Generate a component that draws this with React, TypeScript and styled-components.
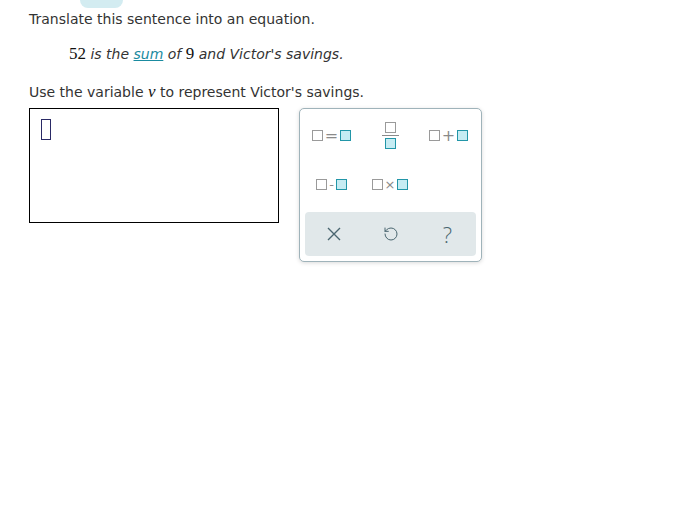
import styled, { createGlobalStyle } from "styled-components";
import { RotateCcw } from "lucide-react";

const GlobalStyle = createGlobalStyle`
  body {
    margin: 0;
    background: #fff;
    font-family: "DejaVu Sans", Verdana, sans-serif;
    color: #333;
  }
`;

const Box = ({ filled }: { filled?: boolean }) => <Square $filled={filled} />;

const App = () => {
  return (
    <>
      <GlobalStyle />
      <Page>
        <TopTab />
        <Prompt>Translate this sentence into an equation.</Prompt>
        <Sentence>
          <Num>52</Num> is the <Term href="#">sum</Term> of <Num>9</Num> and
          Victor's savings.
        </Sentence>
        <Prompt>
          Use the variable <Var>v</Var> to represent Victor's savings.
        </Prompt>
        <Workspace>
          <AnswerBox>
            <Cursor />
          </AnswerBox>
          <Keypad>
            <KeyGrid>
              <Key>
                <Box />
                <Op>=</Op>
                <Box filled />
              </Key>
              <Key>
                <Fraction>
                  <Box />
                  <FracBar />
                  <Box filled />
                </Fraction>
              </Key>
              <Key>
                <Box />
                <Op>+</Op>
                <Box filled />
              </Key>
              <Key>
                <Box />
                <Op $small>-</Op>
                <Box filled />
              </Key>
              <Key>
                <Box />
                <Op $small>×</Op>
                <Box filled />
              </Key>
            </KeyGrid>
            <ActionBar>
              <Action>
                <svg width="14" height="14" viewBox="0 0 14 14">
                  <path
                    d="M1 1 L13 13 M13 1 L1 13"
                    stroke="#4a6670"
                    strokeWidth="1.4"
                    fill="none"
                  />
                </svg>
              </Action>
              <Action>
                <RotateCcw size={16} strokeWidth={1.5} color="#4a6670" />
              </Action>
              <Action>
                <Help>?</Help>
              </Action>
            </ActionBar>
          </Keypad>
        </Workspace>
      </Page>
    </>
  );
};

const Page = styled.div`
  position: relative;
  padding: 10px 29px;
`;

const TopTab = styled.div`
  position: absolute;
  left: 80px;
  top: -10px;
  width: 43px;
  height: 18px;
  border-radius: 8px;
  background: #d3ecf1;
`;

const Prompt = styled.p`
  margin: 0;
  font-size: 14px;
  line-height: 18px;
  color: #333;
`;

const Sentence = styled.p`
  margin: 17px 0 20px 40px;
  font-size: 14px;
  line-height: 18px;
  font-style: italic;
  color: #333;
`;

const Num = styled.span`
  font-family: "Liberation Serif", serif;
  font-style: normal;
  font-size: 17px;
  color: #111;
`;

const Var = styled.span`
  font-family: "Liberation Serif", serif;
  font-style: italic;
  font-size: 17px;
  color: #111;
`;

const Term = styled.a`
  color: #1a8ba0;
  text-decoration: underline;
`;

const Workspace = styled.div`
  display: flex;
  align-items: flex-start;
  gap: 20px;
  margin-top: 7px;
`;

const AnswerBox = styled.div`
  width: 250px;
  height: 115px;
  border: 1px solid #000;
  padding: 10px 11px;
  box-sizing: border-box;
`;

const Cursor = styled.div`
  width: 10px;
  height: 21px;
  border: 1px solid #2a2a66;
  box-sizing: border-box;
`;

const Keypad = styled.div`
  width: 183px;
  box-sizing: border-box;
  border: 1px solid #9fb3ba;
  border-radius: 5px;
  box-shadow: 0 1px 4px rgba(0, 0, 0, 0.15);
  padding: 2px 5px 5px;
  background: #fff;
`;

const KeyGrid = styled.div`
  display: grid;
  grid-template-columns: repeat(3, 57px);
  grid-auto-rows: 49px;
  justify-content: space-between;
  margin: 0 -1px 3px -2px;
`;

const Key = styled.div`
  display: flex;
  align-items: center;
  justify-content: center;
  gap: 2px;
`;

const Square = styled.span<{ $filled?: boolean }>`
  display: block;
  width: 11px;
  height: 11px;
  box-sizing: border-box;
  border: 1.5px solid ${(p) => (p.$filled ? "#2296a8" : "#9a9a9a")};
  background: ${(p) => (p.$filled ? "#c6ecf3" : "#fff")};
`;

const Op = styled.span<{ $small?: boolean }>`
  font-size: ${(p) => (p.$small ? "13px" : "16px")};
  line-height: 10px;
  color: #8a8a8a;
`;

const Fraction = styled.div`
  display: flex;
  flex-direction: column;
  align-items: center;
  gap: 2px;
`;

const FracBar = styled.span`
  display: block;
  width: 17px;
  height: 1.5px;
  background: #8a8a8a;
`;

const ActionBar = styled.div`
  display: grid;
  grid-template-columns: repeat(3, 1fr);
  height: 44px;
  background: #e1e8ea;
  border-radius: 4px;
`;

const Action = styled.div`
  display: flex;
  align-items: center;
  justify-content: center;
`;

const Help = styled.span`
  font-size: 22px;
  font-weight: 300;
  color: #4a6670;
  font-family: "Open Sans", sans-serif;
`;

export default App;
